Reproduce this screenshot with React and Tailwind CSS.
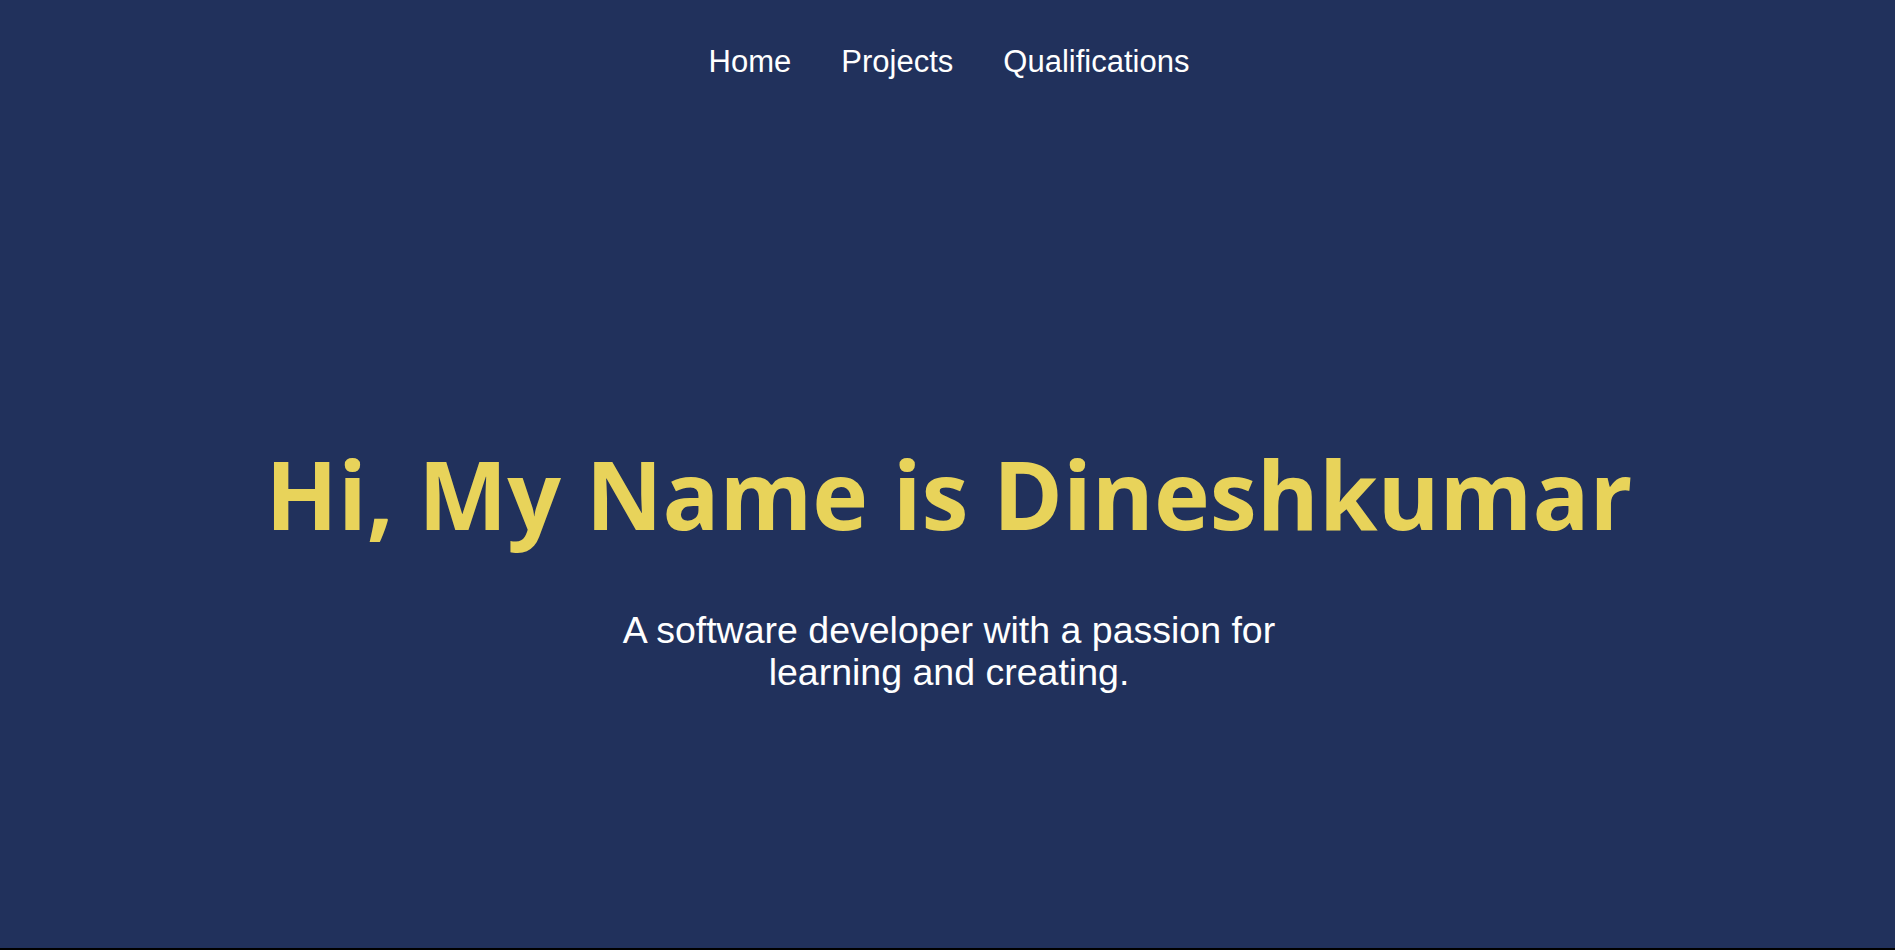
export default function App() {
  return (
    <div className="w-full h-[950px] bg-black">
      <div className="h-[948px] bg-[#21315c] flex flex-col items-center pl-[3px]">
        <nav className="pt-[39px]">
          <ul className="flex gap-[50px] text-[31px] text-white" style={{ fontFamily: '"Liberation Sans", Arial, sans-serif' }}>
            <li><a href="#">Home</a></li>
            <li><a href="#">Projects</a></li>
            <li><a href="#">Qualifications</a></li>
          </ul>
        </nav>
        <h1 className="mt-[361px] text-[94.5px] font-bold text-[#e8d35a] leading-none" style={{ fontFamily: '"Open Sans", "Noto Sans", sans-serif' }}>
          Hi, My Name is Dineshkumar
        </h1>
        <p className="mt-[68px] max-w-[700px] text-center text-[37.5px] leading-[42px] text-white" style={{ fontFamily: '"Liberation Sans", Arial, sans-serif' }}>
          A software developer with a passion for learning and creating.
        </p>
      </div>
    </div>
  );
}
